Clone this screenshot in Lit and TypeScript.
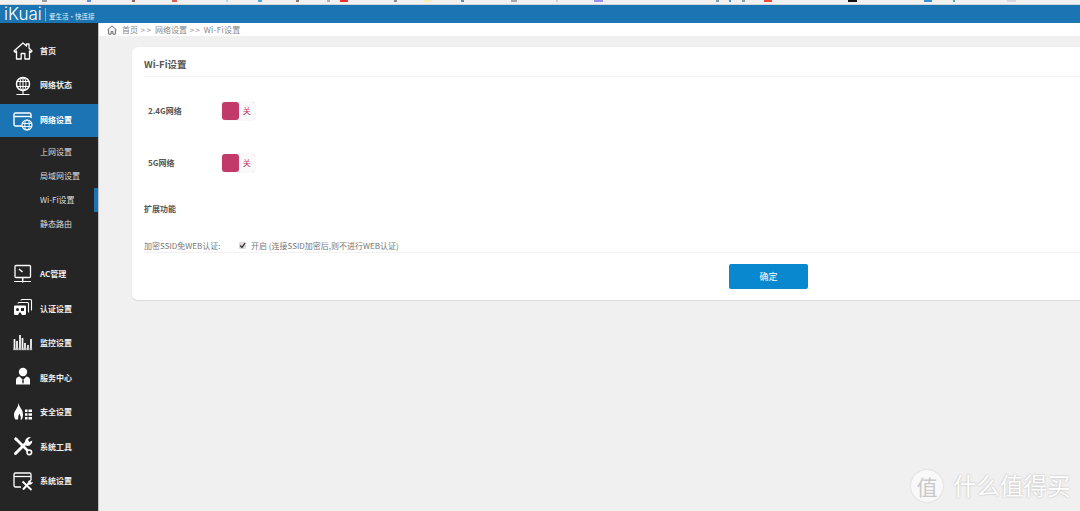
import { LitElement, html, css, svg } from "lit";
import { customElement } from "lit/decorators.js";

const ICONS: Record<string, unknown> = {
  home: svg`<path d="M1 10 10 2l3.500 3V3h2.500v4.200L19 10l-1.200 1.200L16.500 10v8h-4.600v-5.500H8.200V18H3.500v-8l-1.300 1.200z" fill="none" stroke="#fff" stroke-width="1.300" stroke-linejoin="round"/>`,
  globe: svg`<circle cx="10" cy="8" r="6.500" fill="none" stroke="#fff" stroke-width="1.500"/><ellipse cx="10" cy="8" rx="3" ry="6.500" fill="none" stroke="#fff"/><path d="M3.500 5.500h13M3.500 10.500h13M10 1.500v13M10 14.500v4M3.500 18.500h13" fill="none" stroke="#fff" stroke-width="1.100"/>`,
  net: svg`<path d="M9 15H2.500A1.500 1.500 0 0 1 1 13.500v-10A1.500 1.500 0 0 1 2.500 2h14A1.500 1.500 0 0 1 18 3.500V7" fill="none" stroke="#fff" stroke-width="1.400"/><path d="M1 5.500h17" stroke="#fff" stroke-width="1.400"/><circle cx="14" cy="14" r="5" fill="none" stroke="#fff" stroke-width="1.200"/><ellipse cx="14" cy="14" rx="2.200" ry="5" fill="none" stroke="#fff" stroke-width=".9"/><path d="M9 12.500h10M9 15.500h10" stroke="#fff" stroke-width=".9"/>`,
  ac: svg`<rect x="2" y="1.500" width="15.500" height="12" rx="1" fill="none" stroke="#fff" stroke-width="1.300"/><path d="M6 5l3.500 3" stroke="#fff" stroke-width="1.500"/><path d="M1 17.500h17" stroke="#fff"/><path d="M9.700 13.500v5" stroke="#fff" stroke-width="1.500"/>`,
  auth: svg`<path d="M1 8.500q0-1 1-1h10q1 0 1 1v7.500q0 1-1 1H9l-1.500-2.500H6.300L5 17H2q-1 0-1-1z" fill="#fff"/><circle cx="4.500" cy="11.500" r="1.500" fill="#252525"/><rect x="8" y="10" width="3" height="3" fill="#252525"/><path d="M5 5.500q0-1 1-1h8.500q1 0 1 1v9M8 2.500q0-1 1-1h8.500q1 0 1 1v10" fill="none" stroke="#fff" stroke-width="1.100"/>`,
  bars: svg`<path d="M1.500 6v11M4 8v9M7 2v15M9.500 5v12M12 10v7M15 12v5M18 6v11" stroke="#fff" stroke-width="1.700"/><path d="M0.500 16h19" stroke="#bbb" stroke-width="2.500" stroke-dasharray="1 .6"/>`,
  person: svg`<circle cx="10" cy="5" r="4.200" fill="#fff"/><path d="M3 17.500v-4.500q0-3 3.500-3.500L10 13l3.500-3.500q3.500.5 3.500 3.500v4.500z" fill="#fff"/><path d="M10 12.500l-1 1.500 1 3.500 1-3.500z" fill="#252525"/>`,
  fire: svg`<path d="M5.500 1q.5 3 2.500 5.500 2 2.500 2 6 0 2.500-1 5H7.500q1-3-1.200-6Q5 14 5 17.500H2.500Q1 16 1 12.500q.3-3 2.200-5.200Q5.500 4.500 5.500 1z" fill="#fff"/><path d="M12 7.500h2.500v2.500H12zm3.500 0H19v2.500h-3.500zM12 11.300h2.500v2.500H12zm3.500 0H19v2.500h-3.500zM12 15h2.500v2.500H12zm3.500 0H19v2.500h-3.500z" fill="#fff"/>`,
  tools: svg`<path d="M2.500 17.500 13 7" stroke="#fff" stroke-width="3" stroke-linecap="round"/><path d="M13 9.500Q10.500 5 14 2q1.500-1.200 4-1l-3 2.800 1.300 2.200 3-1.500q.2 3-2.300 4.800-2 1.200-4 .2z" fill="#fff"/><path d="M2.500 2.500 16 16" stroke="#fff" stroke-width="2.600"/><path d="M1 3l1.500-2 2.500 2-2 2z" fill="#fff"/><circle cx="16.300" cy="16.300" r="2.300" fill="#252525" stroke="#fff" stroke-width="1.600"/>`,
  sys: svg`<path d="M8 16H2.500A1.500 1.500 0 0 1 1 14.500v-11A1.500 1.500 0 0 1 2.500 2h14A1.500 1.500 0 0 1 18 3.500V9" fill="none" stroke="#fff" stroke-width="1.300"/><path d="M1 5.500h17" stroke="#fff" stroke-width="1.300"/><path d="M10 18.500 16 12" stroke="#fff" stroke-width="2"/><path d="M15 13.500Q14 10 17 9l2-.2-1.500 1.700 1 1 1.500-.7q-.3 2.500-3 3z" fill="#fff"/><path d="M9.500 10.500l9 8.500" stroke="#fff" stroke-width="1.800"/>`,
};

const TOP = [
  { n: "首页", i: "home" },
  { n: "网络状态", i: "globe" },
  { n: "网络设置", i: "net", active: true },
];
const SUB = [
  { n: "上网设置" },
  { n: "局域网设置" },
  { n: "Wi-Fi设置", active: true },
  { n: "静态路由" },
];
const REST = [
  { n: "AC管理", i: "ac" },
  { n: "认证设置", i: "auth" },
  { n: "监控设置", i: "bars" },
  { n: "服务中心", i: "person" },
  { n: "安全设置", i: "fire" },
  { n: "系统工具", i: "tools" },
  { n: "系统设置", i: "sys" },
];

const MARKS: [number, number, string][] = [
  [42, 5, "#9a9a9a"], [87, 4, "#5f86d8"], [132, 3, "#a0605a"], [172, 5, "#d8604a"],
  [226, 2, "#b5d5e0"], [258, 4, "#4aa8e0"], [296, 3, "#8a7a70"], [327, 3, "#b0b0b0"],
  [340, 8, "#f03030"], [394, 3, "#8a8a8a"], [424, 8, "#f4f2b8"], [461, 3, "#6a8a9a"],
  [511, 6, "#a8a8a8"], [556, 2, "#d0d0d0"], [594, 9, "#9a90f0"], [716, 3, "#8a9aa8"],
  [729, 2, "#4a90d8"], [742, 3, "#8a9aa8"], [764, 8, "#f04a3a"], [848, 9, "#111111"],
  [924, 8, "#3a90d0"], [953, 2, "#5aa0b0"], [1007, 9, "#d8d8e0"],
];

@customElement("app-root")
export class AppRoot extends LitElement {
  static styles = css`
    :host {
      display: block;
      width: 1080px;
      height: 511px;
      overflow: hidden;
      position: relative;
      font-family: "Noto Sans CJK SC", "Liberation Sans", sans-serif;
      background: #f0f0f0;
    }
    .strip { height: 5px; display: flex; background: #f1f1f1; border-bottom: 1px solid #d4d4d4; box-sizing: border-box; }
    .mark { height: 2px; flex: none; }
    .head { height: 18px; background: #1a75b2; display: flex; align-items: center; color: #fff; }
    .logo { font-family: Inter, sans-serif; font-weight: 300; font-size: 17px; line-height: 18px; margin-left: 4px; width: 41px; white-space: nowrap; }
    .sep { width: 1px; height: 13px; background: #7fb3d6; }
    .tag { font-size: 6.500px; margin-left: 3px; margin-top: 4px; color: #e4f0f8; white-space: nowrap; }
    .body { display: flex; height: 488px; }
    .side { width: 98px; flex: none; background: #252525; padding-top: 11px; color: #eee; }
    .item { height: 34.500px; display: flex; align-items: center; padding-left: 13px; gap: 7px; font-size: 8px; font-weight: 700; white-space: nowrap; }
    .item.up span { margin-bottom: 2px; }
    .item.active { background: #1b75b5; color: #fff; height: 33px; margin-top: 1px; }
    .item svg { width: 20px; height: 20px; flex: none; }
    .subs { padding-top: 3px; margin-bottom: 20.250px; }
    .sub { height: 24px; box-sizing: border-box; padding: 0 0 2px 40px; display: flex; align-items: center; font-size: 8px; color: #ddd; white-space: nowrap; }
    .sub.active { border-right: 4px solid #1b75b5; }
    .main { flex: 1; min-width: 0; overflow: hidden; border-left: 1px solid #c4c4c4; }
    .crumb { height: 13px; background: #fff; display: flex; align-items: center; padding-left: 8px; font-size: 8px; color: #888; gap: 2.500px; white-space: nowrap; }
    .crumb svg { width: 10px; height: 10px; flex: none; margin-right: 2.500px; }
    .crumb b { font-weight: 400; letter-spacing: 1.500px; }
    .crumb em { font-style: normal; letter-spacing: 0.300px; }
    .card { width: 1273px; margin: 11px 0 0 33px; background: #fff; border-radius: 6px; border-bottom: 1px solid #dcdcdc; box-sizing: border-box; padding: 0 12px; height: 254px; display: flex; flex-direction: column; box-shadow: 0 0 1px #ddd; }
    .title { height: 30px; display: flex; align-items: center; border-bottom: 1px solid #f2f2f2; font-size: 9.500px; font-weight: 700; color: #555; box-sizing: border-box; flex: none; }
    .title span { margin-top: 4px; }
    .rows { padding-top: 8px; }
    .row { height: 52px; display: flex; align-items: center; padding-left: 4px; font-size: 8px; font-weight: 700; color: #555; flex: none; }
    .row .lbl { width: 74px; margin-bottom: 2px; }
    .tog { width: 33px; height: 18px; display: flex; border-radius: 3px; background: #fafafa; box-shadow: 0 0 1px #bbb; align-items: center; }
    .knob { width: 16.500px; height: 18px; border-radius: 3px; background: #c23a69; }
    .off { flex: 1; text-align: center; font-size: 8px; font-weight: 400; color: #c23a69; margin-bottom: 2px; }
    .ext { margin-top: 10px; height: 20px; padding-bottom: 2px; box-sizing: border-box; display: flex; align-items: center; font-size: 8px; font-weight: 700; color: #555; flex: none; }
    .ssid { margin-top: 20px; height: 14px; display: flex; align-items: center; font-size: 8px; color: #777; border-bottom: 1px solid #f2f2f2; flex: none; white-space: nowrap; box-sizing: border-box; }
    .ssid .k { width: 95px; }
    .ssid .cb { width: 7px; height: 7px; border-radius: 1px; background: #dcdcdc; margin-right: 5px; flex: none; display: block; }
    .foot { padding-top: 11px; display: flex; justify-content: center; }
    .btn { width: 79px; height: 25px; border: 0; padding: 0; background: #0a88cf; color: #fff; border-radius: 2px; font-family: inherit; font-size: 9px; }
    .wm { position: absolute; left: 911px; top: 468px; display: flex; align-items: center; gap: 10px; color: #fff; text-shadow: 0 0 2px #aaa; white-space: nowrap; }
    .wm .c { width: 32px; height: 32px; border-radius: 50%; background: #f9f9f9; box-shadow: 0 0 2px #ccc; color: #c8c8c8; font-size: 21px; display: flex; align-items: center; justify-content: center; text-shadow: none; }
    .wm .t { font-size: 23.500px; margin-bottom: 2px; }
  `;

  private marks() {
    let x = 0;
    return MARKS.map(([pos, w, c]) => {
      const gap = pos - x;
      x = pos + w;
      return html`<i class="mark" style="margin-left:${gap}px;width:${w}px;background:${c}"></i>`;
    });
  }

  private item(it: { n: string; i: string; active?: boolean }, up: boolean) {
    return html`<div class="item ${it.active ? "active" : ""} ${up ? "up" : ""}">
      <svg viewBox="0 0 20 20">${ICONS[it.i]}</svg><span>${it.n}</span>
    </div>`;
  }

  private row(label: string) {
    return html`<div class="row"><span class="lbl">${label}</span>
      <div class="tog"><div class="knob"></div><div class="off">关</div></div></div>`;
  }

  render() {
    return html`
      <div class="strip">${this.marks()}</div>
      <div class="head">
        <span class="logo">iKuai</span><i class="sep"></i><span class="tag">爱生活·快连接</span>
      </div>
      <div class="body">
        <nav class="side">
          ${TOP.map((t) => this.item(t, true))}
          <div class="subs">
            ${SUB.map((s) => html`<div class="sub ${s.active ? "active" : ""}">${s.n}</div>`)}
          </div>
          ${REST.map((t) => this.item(t, false))}
        </nav>
        <main class="main">
          <div class="crumb">
            <svg viewBox="0 0 12 12"><path d="M.5 6 6 1l5.500 5M2 5.500V11h3V7.500h2V11h3V5.500" fill="none" stroke="#666" stroke-width="1.200"/></svg>
            <span>首页</span><b>&gt;&gt;</b><span>网络设置</span><b>&gt;&gt;</b><em>Wi-Fi设置</em>
          </div>
          <section class="card">
            <div class="title"><span>Wi-Fi设置</span></div>
            <div class="rows">${this.row("2.4G网络")}${this.row("5G网络")}</div>
            <div class="ext">扩展功能</div>
            <div class="ssid">
              <span class="k">加密SSID免WEB认证:</span>
              <svg class="cb" viewBox="0 0 7 7"><path d="M1.200 3.500 3 5.500 6 1.200" fill="none" stroke="#333" stroke-width="1.300"/></svg>
              <span>开启 (连接SSID加密后,则不进行WEB认证)</span>
            </div>
            <div class="foot"><button class="btn">确定</button></div>
          </section>
        </main>
      </div>
      <div class="wm"><span class="c">值</span><span class="t">什么值得买</span></div>
    `;
  }
}
